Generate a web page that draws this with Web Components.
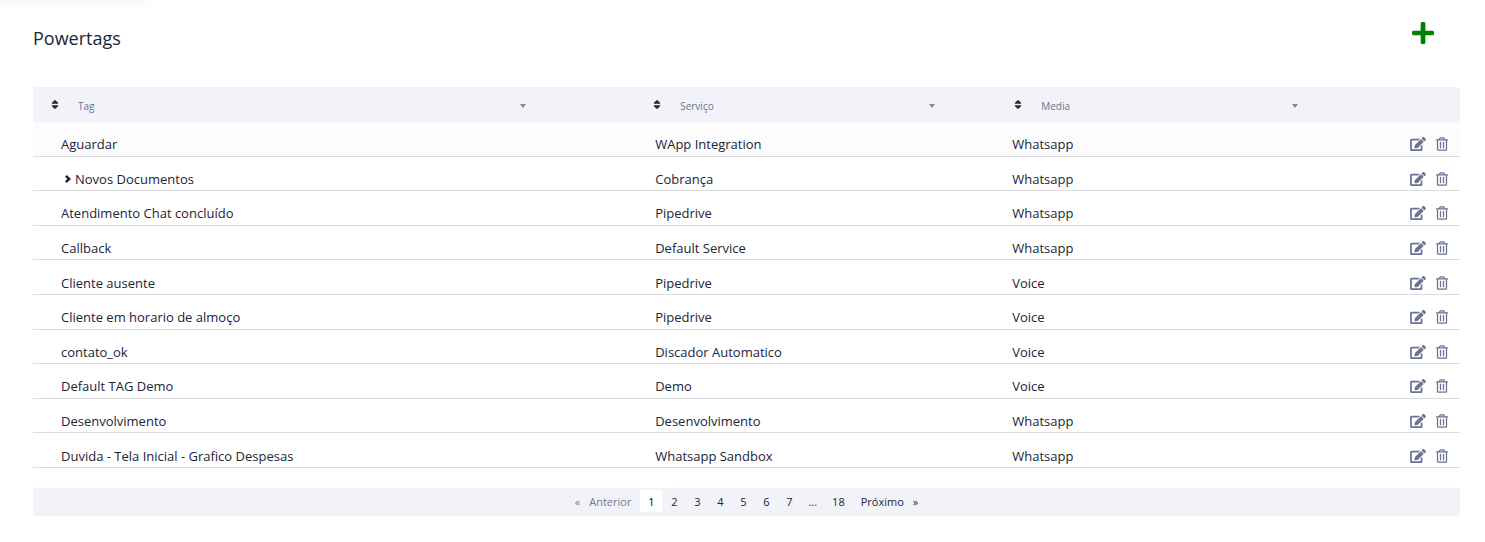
<!DOCTYPE html>
<html lang="pt-BR">
<head>
<meta charset="utf-8">
<title>Powertags</title>
<style>
body { margin: 0; background: #fff; color: #212538; font: 13px/20px "Open Sans", "Noto Sans", sans-serif; }
</style>
</head>
<body>
<powertags-page></powertags-page>
<script>
const ICONS = {
  plus: ['0 32 448 448', 'M416 208H272V64c0-17.67-14.33-32-32-32h-32c-17.67 0-32 14.33-32 32v144H32c-17.67 0-32 14.33-32 32v32c0 17.67 14.33 32 32 32h144v144c0 17.67 14.33 32 32 32h32c17.67 0 32-14.33 32-32V304h144c17.67 0 32-14.33 32-32v-32c0-17.67-14.33-32-32-32z'],
  sort: ['0 56 320 400', 'M41 288h238c21.4 0 32.1 25.9 17 41L177 448c-9.4 9.4-24.6 9.4-33.9 0L24 329c-15.1-15.1-4.4-41 17-41zm255-105L177 64c-9.4-9.4-24.6-9.4-33.9 0L24 183c-15.1 15.1-4.4 41 17 41h238c21.4 0 32.1-25.9 17-41z'],
  caret: ['0 0 6 4', 'M0 0h6L3 4z'],
  chevron: ['0 0 6 8', 'M1.8 0 6 4 1.8 8 0 6.3 2.3 4 0 1.7z'],
  edit: ['0 0 576 512', 'M402.6 83.2l90.2 90.2c3.8 3.8 3.8 10 0 13.8L274.4 405.6l-92.8 10.3c-12.4 1.4-22.9-9.1-21.5-21.5l10.3-92.8L388.8 83.2c3.8-3.8 10-3.8 13.8 0zm162-22.9l-48.8-48.8c-15.2-15.2-39.9-15.2-55.2 0l-35.4 35.4c-3.8 3.8-3.8 10 0 13.8l90.2 90.2c3.8 3.8 10 3.8 13.8 0l35.4-35.4c15.2-15.3 15.2-40 0-55.2zM384 346.2V448H64V128h229.8c3.2 0 6.2-1.3 8.5-3.5l40-40c7.6-7.6 2.2-20.5-8.5-20.5H48C21.5 64 0 85.5 0 112v352c0 26.5 21.5 48 48 48h352c26.5 0 48-21.5 48-48V306.2c0-10.7-12.9-16-20.5-8.5l-40 40c-2.2 2.3-3.5 5.3-3.5 8.5z'],
  trash: ['0 0 448 512', 'M268 416h24a12 12 0 0 0 12-12V188a12 12 0 0 0-12-12h-24a12 12 0 0 0-12 12v216a12 12 0 0 0 12 12zM432 80h-82.41l-34-56.7A48 48 0 0 0 274.41 0H173.59a48 48 0 0 0-41.16 23.3L98.41 80H16A16 16 0 0 0 0 96v16a16 16 0 0 0 16 16h16v336a48 48 0 0 0 48 48h288a48 48 0 0 0 48-48V128h16a16 16 0 0 0 16-16V96a16 16 0 0 0-16-16zM171.84 50.91A6 6 0 0 1 177 48h94a6 6 0 0 1 5.15 2.91L293.61 80H154.39zM368 464H80V128h288zm-212-48h24a12 12 0 0 0 12-12V188a12 12 0 0 0-12-12h-24a12 12 0 0 0-12 12v216a12 12 0 0 0 12 12z']
};
const BUTTON = 'button { appearance: none; border: 0; padding: 0; margin: 0; background: none; color: inherit; font: inherit; cursor: pointer; }';

class AppIcon extends HTMLElement {
  constructor() {
    super();
    const [box, path] = ICONS[this.getAttribute('name')];
    this.attachShadow({ mode: 'open' }).innerHTML = `
      <style>:host { display: block; } svg { display: block; width: 100%; height: 100%; fill: currentColor; }</style>
      <svg viewBox="${box}" aria-hidden="true"><path d="${path}"/></svg>`;
  }
}
customElements.define('app-icon', AppIcon);

class PageHeader extends HTMLElement {
  constructor() {
    super();
    this.attachShadow({ mode: 'open' }).innerHTML = `
      <style>
        ${BUTTON}
        :host { display: flex; justify-content: space-between; align-items: flex-start; padding: 22px 26px 0 0; height: 65px; }
        h1 { margin: 0; padding-top: 4px; font-weight: 400; font-size: 18px; line-height: 24px; }
        app-icon { width: 22px; height: 22px; color: #008000; }
      </style>
      <h1><slot></slot></h1>
      <button aria-label="Adicionar"><app-icon name="plus"></app-icon></button>`;
  }
}
customElements.define('page-header', PageHeader);

class ColumnFilter extends HTMLElement {
  constructor() {
    super();
    const label = this.getAttribute('label');
    this.attachShadow({ mode: 'open' }).innerHTML = `
      <style>
        ${BUTTON}
        :host { display: flex; align-items: center; padding: 0 22px 0 18px; height: 35px; }
        button { flex: none; width: 27px; height: 35px; padding-bottom: 1px; }
        button app-icon { width: 8px; height: 9px; }
        label { flex: none; box-sizing: border-box; width: 80%; display: grid; align-items: center; color: #6c7293; }
        select { grid-area: 1 / 1; appearance: none; width: 100%; height: 35px; border: 0; padding: 3px 0 0; margin: 0;
          background: none; color: inherit; font: inherit; font-size: 10px; }
        label app-icon { grid-area: 1 / 1; justify-self: end; width: 6px; height: 4px; margin: 2px 2px 0 0; color: #888; pointer-events: none; }
      </style>
      <button aria-label="Ordenar por ${label}"><app-icon name="sort"></app-icon></button>
      <label><select aria-label="${label}"><option>${label}</option></select><app-icon name="caret"></app-icon></label>`;
  }
}
customElements.define('column-filter', ColumnFilter);

class RowActions extends HTMLElement {
  constructor() {
    super();
    this.attachShadow({ mode: 'open' }).innerHTML = `
      <style>
        ${BUTTON}
        :host { display: flex; justify-content: flex-end; align-items: center; gap: 10px; padding-right: 12px; height: 20px; color: #6c7293; }
        .edit { width: 16px; height: 14px; }
        .trash { width: 12px; height: 14px; }
      </style>
      <button aria-label="Editar"><app-icon class="edit" name="edit"></app-icon></button>
      <button aria-label="Excluir"><app-icon class="trash" name="trash"></app-icon></button>`;
  }
}
customElements.define('row-actions', RowActions);

const ROWS = [
  ['Aguardar', 'WApp Integration', 'Whatsapp'],
  ['Novos Documentos', 'Cobrança', 'Whatsapp', true],
  ['Atendimento Chat concluído', 'Pipedrive', 'Whatsapp'],
  ['Callback', 'Default Service', 'Whatsapp'],
  ['Cliente ausente', 'Pipedrive', 'Voice'],
  ['Cliente em horario de almoço', 'Pipedrive', 'Voice'],
  ['contato_ok', 'Discador Automatico', 'Voice'],
  ['Default TAG Demo', 'Demo', 'Voice'],
  ['Desenvolvimento', 'Desenvolvimento', 'Whatsapp'],
  ['Duvida - Tela Inicial - Grafico Despesas', 'Whatsapp Sandbox', 'Whatsapp']
];

class TagTable extends HTMLElement {
  constructor() {
    super();
    const rows = ROWS.map(([tag, service, media, parent]) => `<tr>
      <td>${parent ? `<span class="parent"><app-icon name="chevron"></app-icon>${tag}</span>` : tag}</td>
      <td>${service}</td><td>${media}</td><td><row-actions></row-actions></td></tr>`).join('');
    this.attachShadow({ mode: 'open' }).innerHTML = `
      <style>
        :host { display: block; }
        table { width: 100%; height: 381px; table-layout: fixed; border-collapse: separate; border-spacing: 0; }
        .tag { width: 42.2%; } .service { width: 25.3%; } .media { width: 25.5%; }
        th { padding: 0; height: 35px; background: #f2f3f8; font-weight: 400; text-align: left; }
        th:first-child { border-radius: 2px 0 0 2px; }
        th:last-child { border-radius: 0 2px 2px 0; }
        td { padding: 12px 0 1px; border-bottom: 1px solid #dcdcdf; vertical-align: middle; }
        td:nth-child(1) { padding-left: 28px; }
        td:nth-child(2) { padding-left: 20px; }
        td:nth-child(3) { padding-left: 16px; }
        tbody tr:first-child { background: #fcfcfc; }
        .parent { display: flex; align-items: center; gap: 4px; padding-left: 4px; }
        .parent app-icon { width: 6px; height: 8px; }
      </style>
      <table>
        <colgroup><col class="tag"><col class="service"><col class="media"><col></colgroup>
        <thead><tr>
          <th><column-filter label="Tag"></column-filter></th>
          <th><column-filter label="Serviço"></column-filter></th>
          <th><column-filter label="Media"></column-filter></th>
          <th></th>
        </tr></thead>
        <tbody>${rows}</tbody>
      </table>`;
  }
}
customElements.define('tag-table', TagTable);

class PageNav extends HTMLElement {
  constructor() {
    super();
    const pages = ['1', '2', '3', '4', '5', '6', '7', '...', '18'];
    this.attachShadow({ mode: 'open' }).innerHTML = `
      <style>
        :host { display: block; margin-top: 20px; background: #f2f3f8; }
        nav { display: flex; justify-content: center; gap: 1px; padding: 2px 0 4px; font-size: 11px; line-height: 22px; }
        a { box-sizing: border-box; min-width: 22px; padding: 0 7px; color: inherit; text-align: center; text-decoration: none; border-radius: 1px; white-space: pre; }
        a span { display: block; padding-top: 1px; line-height: 21px; }
        a.step { display: flex; gap: 9px; padding: 0 8px; }
        a.off { color: #74788d; }
        a[aria-current] { background: #fff; color: #000; }
      </style>
      <nav aria-label="Paginação">
        <a class="step off" href="#"><span>«</span><span>Anterior</span></a>
        ${pages.map((p, i) => `<a href="#"${i ? '' : ' aria-current="page"'}><span>${p}</span></a>`).join('')}
        <a class="step" href="#"><span>Próximo</span><span>»</span></a>
      </nav>`;
  }
}
customElements.define('page-nav', PageNav);

class PowertagsPage extends HTMLElement {
  constructor() {
    super();
    this.attachShadow({ mode: 'open' }).innerHTML = `
      <style>
        :host { display: block; position: relative; overflow: hidden; padding: 0 25px 26px 33px; }
        .shade { position: absolute; left: 0; top: -20px; width: 146px; height: 20px; box-shadow: 0 0 14px rgba(0, 0, 0, .08); }
      </style>
      <div class="shade"></div>
      <page-header>Powertags</page-header>
      <tag-table></tag-table>
      <page-nav></page-nav>`;
  }
}
customElements.define('powertags-page', PowertagsPage);
</script>
</body>
</html>
